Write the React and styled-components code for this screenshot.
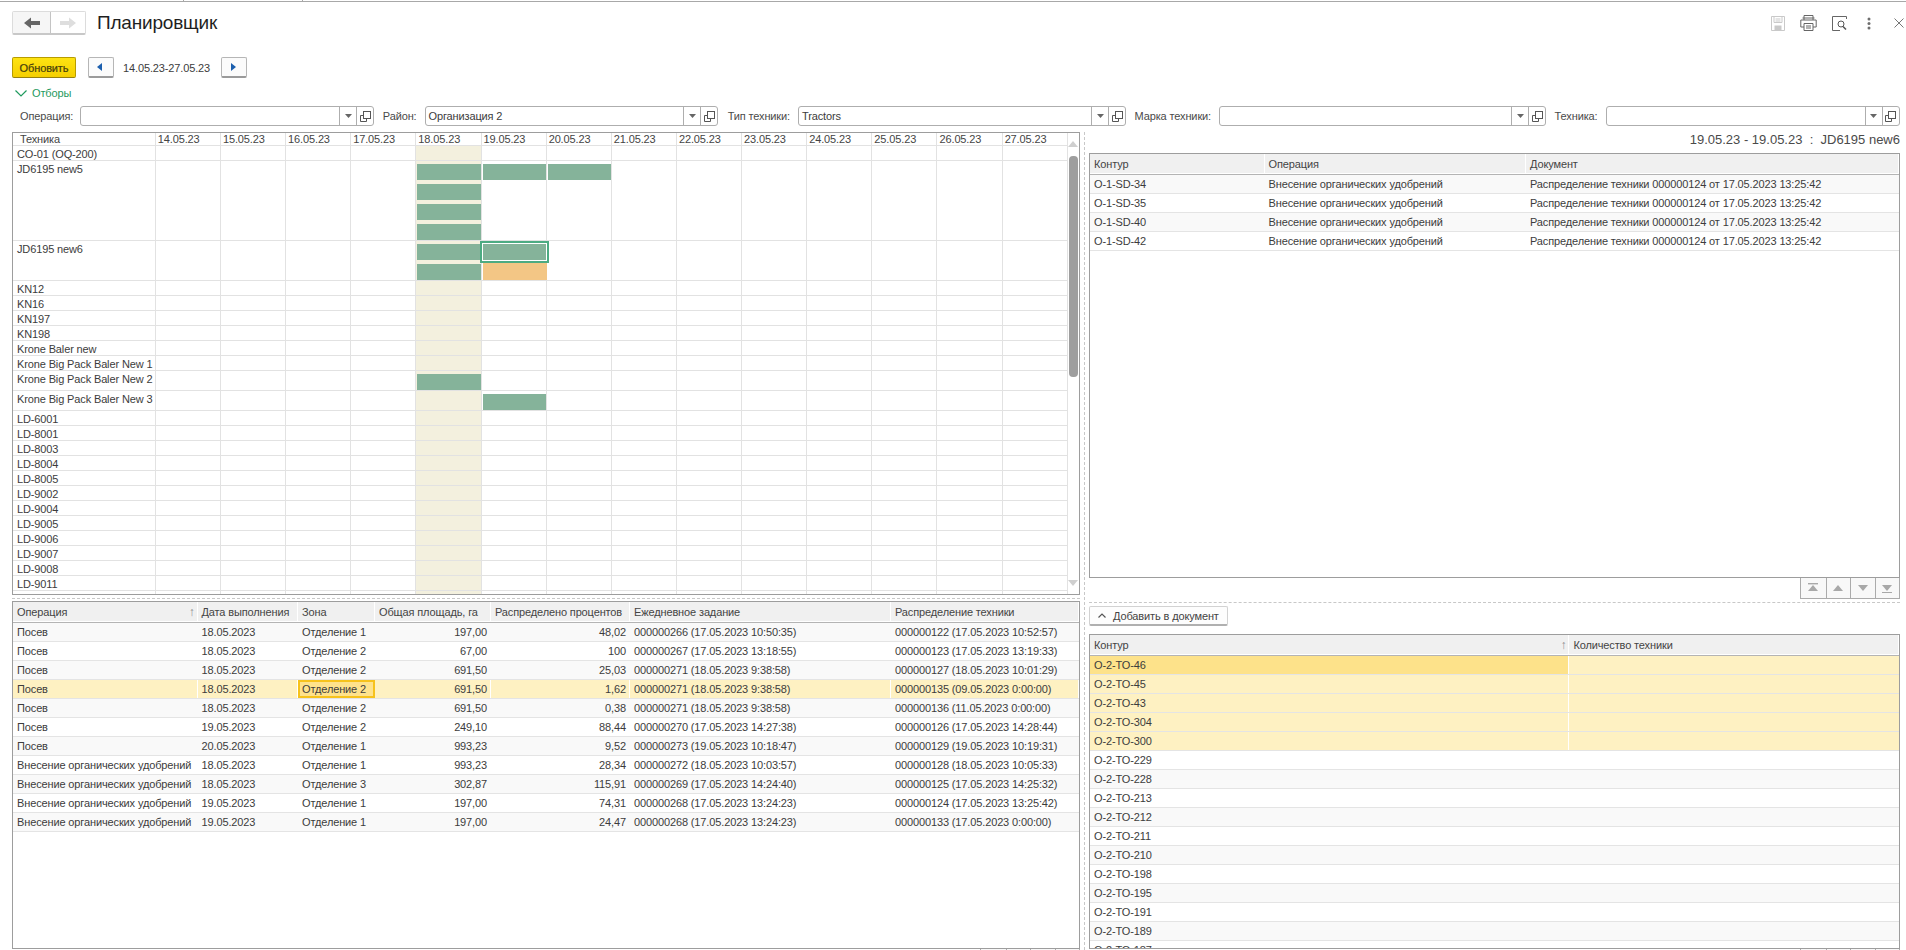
import React from 'react'
import styled, { createGlobalStyle } from 'styled-components'

const GlobalStyle = createGlobalStyle`
  html, body { margin: 0; padding: 0; background: #fff; }
  body { font-family: "Liberation Sans", Arial, sans-serif; font-size: 11px; letter-spacing: -0.13px; color: #3c3c3c; }
  * { box-sizing: border-box; }
`

const Page = styled.div`
  width: 1906px;
  height: 950px;
  overflow: hidden;
  display: flex;
  flex-direction: column;
  background: #fff;
`

const TabStrip = styled.div`
  display: flex;
  height: 2px;
  flex: none;
  border-bottom: 1px solid #a8a8a8;
`

const TabEdge = styled.div`
  width: ${(p) => p.$w}px;
  border-right: 1px solid #a8a8a8;
`

const TitleBar = styled.div`
  display: flex;
  align-items: center;
  height: 24px;
  margin-top: 9px;
  padding: 0 2px 0 12px;
  flex: none;
`

const NavGroup = styled.div`
  display: flex;
  width: 74px;
  height: 24px;
  border: 1px solid #dcdcdc;
  border-bottom: 2px solid #c8c8c8;
  border-radius: 2px;
`

const NavButton = styled.div`
  flex: ${(p) => (p.$active ? '0 0 38px' : '1')};
  display: flex;
  align-items: center;
  justify-content: center;
  background: ${(p) => (p.$active ? '#f6f6f6' : '#fff')};
  border-right: ${(p) => (p.$active ? '1px solid #c4c4c4' : 'none')};
`

const Title = styled.h1`
  margin: 0 0 0 11px;
  font-size: 19px;
  letter-spacing: -0.2px;
  font-weight: 400;
  color: #1f1f1f;
  flex: 1;
`

const TopIcon = styled.svg`
  display: block;
  flex: none;
  margin-left: ${(p) => p.$gap}px;
`

const Toolbar = styled.div`
  display: flex;
  align-items: center;
  height: 21px;
  margin-top: 22px;
  padding-left: 12px;
  flex: none;
`

const RefreshButton = styled.div`
  width: 64px;
  height: 21px;
  display: flex;
  align-items: center;
  justify-content: center;
  background: linear-gradient(#fee312, #f5cf00);
  border: 1px solid #b79c00;
  border-bottom-color: #97810c;
  border-radius: 2px;
  color: #46400c;
  font-size: 11px;
  -webkit-text-stroke: 0.2px #46400c;
`

const StepButton = styled.div`
  width: 26px;
  height: 21px;
  margin-left: ${(p) => p.$gap}px;
  display: flex;
  align-items: center;
  justify-content: center;
  border: 1px solid #b6b6b6;
  border-bottom: 2px solid #9a9a9a;
  border-radius: 2px;
  background: #fbfbfb;
`

const Period = styled.span`
  margin-left: 9px;
  width: 98px;
  font-size: 11px;
`

const FilterToggle = styled.div`
  display: flex;
  align-items: center;
  gap: 5px;
  height: 12px;
  margin-top: 9px;
  padding-left: 15px;
  color: #1f9a5e;
  font-size: 11px;
  flex: none;
`

const FilterRow = styled.div`
  display: flex;
  align-items: center;
  height: 20px;
  margin-top: 7px;
  padding-left: 20px;
  flex: none;
`

const FilterLabel = styled.label`
  width: ${(p) => p.$w}px;
  padding-right: 8px;
  text-align: right;
  white-space: nowrap;
  color: #4a4a4a;
`

const Field = styled.div`
  width: ${(p) => p.$w}px;
  height: 20px;
  display: flex;
  border: 1px solid #aeaeae;
  border-radius: 3px;
  background: #fff;
`

const FieldText = styled.div`
  flex: 1;
  padding-left: 3px;
  line-height: 18px;
  white-space: nowrap;
`

const FieldButton = styled.div`
  width: 17px;
  display: flex;
  align-items: center;
  justify-content: center;
  border-left: 1px solid #aeaeae;
`

const Main = styled.div`
  display: grid;
  grid-template-columns: 1068px 9px 811px;
  height: 818px;
  margin-top: 6px;
  padding-left: 12px;
  flex: none;
`

const Column = styled.div`
  display: flex;
  flex-direction: column;
  min-width: 0;
`

const VSplit = styled.div`
  margin-left: 4px;
  border-left: 1px dashed #c8c8c8;
`

const HSplit = styled.div`
  flex: none;
  height: 1px;
  margin: ${(p) => p.$m};
  border-top: 1px dashed #c8c8c8;
`

const Gantt = styled.div`
  height: 463px;
  flex: none;
  display: flex;
  border: 1px solid #9d9d9d;
  overflow: hidden;
`

const GanttBody = styled.div`
  width: 1054.9px;
  flex: none;
`

const GanttRow = styled.div`
  display: grid;
  grid-template-columns: 142.8px repeat(14, 65.15px);
  height: ${(p) => p.$h}px;
  border-bottom: 1px solid #e2e2e2;
  color: #3c3c3c;
`

const GanttHead = styled(GanttRow)`
  line-height: 12px;
`

const HeadCell = styled.div`
  padding-left: ${(p) => (p.$name ? 7 : 2)}px;
  border-right: 1px solid #e2e2e2;
  white-space: nowrap;
  overflow: hidden;
  color: #444;
`

const NameCell = styled.div`
  padding: 1px 0 0 4px;
  line-height: 14px;
  border-right: 1px solid #e2e2e2;
  white-space: nowrap;
  overflow: hidden;
`

const DayCell = styled.div`
  display: flex;
  flex-direction: column;
  gap: 4px;
  padding: 3px 0 0 1px;
  border-right: 1px solid #e2e2e2;
  background: ${(p) => (p.$today ? '#f3f0de' : 'transparent')};
`

const Bar = styled.div`
  flex: none;
  height: 16px;
  background: ${(p) => (p.$late ? '#f3c685' : '#85b39a')};
  ${(p) => p.$late && 'margin: -1px -1px 0 0; height: 17px;'}
  ${(p) =>
    p.$picked &&
    `
    position: relative;
    z-index: 1;
    box-shadow: 0 0 0 1px #fff, 0 0 0 3px #4dab82;
  `}
`

const ScrollTrack = styled.div`
  flex: 1;
  display: flex;
  flex-direction: column;
  align-items: center;
  padding: 6px 0 6px;
`

const ScrollThumb = styled.div`
  width: 9px;
  height: 221px;
  margin-top: 7px;
  border-radius: 4px;
  background: #9e9e9e;
`

const ScrollDown = styled.div`
  margin-top: auto;
`

const TableBox = styled.div`
  height: ${(p) => p.$h}px;
  flex: none;
  border: 1px solid #9d9d9d;
  overflow: hidden;
`

const HeadRow = styled.div`
  display: grid;
  grid-template-columns: ${(p) => p.$cols};
  height: 21px;
  border-bottom: 1px solid #b4b4b4;
`

const HeadTitle = styled.div`
  display: flex;
  align-items: center;
  justify-content: space-between;
  padding: 0 2px 0 4px;
  background: #f0f0f0;
  border-right: 1px solid #fff;
  border-bottom: 1px solid #fff;
  color: #444;
  white-space: nowrap;
  overflow: hidden;
`

const SortMark = styled.span`
  font-size: 12px;
  color: #8c8c8c;
`

const DataRow = styled.div`
  display: grid;
  grid-template-columns: ${(p) => p.$cols};
  height: 19px;
  border-bottom: 1px solid #e4e4e4;
  background: ${(p) => (p.$marked ? '#fef1c2' : p.$alt ? '#f9f9f9' : '#fff')};
`

const DataCell = styled.div`
  padding: 0 ${(p) => (p.$right ? 3 : 1)}px 0 4px;
  line-height: 18px;
  text-align: ${(p) => (p.$right ? 'right' : 'left')};
  white-space: nowrap;
  overflow: hidden;
  border-right: 1px solid ${(p) => (p.$marked ? '#fff' : 'transparent')};
  background: ${(p) => (p.$strong ? '#fde28a' : 'transparent')};
  ${(p) =>
    p.$focus &&
    `
    background: #fee28c;
    border: 2px solid #f6c21c;
    padding: 0 2px;
    line-height: 14px;
  `}
`

const Caption = styled.div`
  height: 21px;
  flex: none;
  text-align: right;
  font-size: 13px;
  letter-spacing: 0;
  line-height: 15px;
  color: #4a4a4a;
`

const Pager = styled.div`
  align-self: flex-end;
  flex: none;
  display: flex;
  height: 21px;
  border: 1px solid #ababab;
  border-top: none;
`

const PagerButton = styled.div`
  width: 24.5px;
  display: flex;
  align-items: center;
  justify-content: center;
  border-left: ${(p) => (p.$first ? 'none' : '1px solid #ababab')};
  background: #f8f8f8;
`

const AddButton = styled.div`
  width: 139px;
  height: 20px;
  flex: none;
  margin-top: 3px;
  display: flex;
  align-items: center;
  gap: 7px;
  padding-left: 8px;
  border: 1px solid #d2d2d2;
  border-bottom: 2px solid #b0b0b0;
  border-radius: 2px;
  color: #444;
  background: #fdfdfd;
`

const BlankGap = styled.div`
  height: 8px;
  flex: none;
`

const days = ['14.05.23', '15.05.23', '16.05.23', '17.05.23', '18.05.23', '19.05.23', '20.05.23', '21.05.23', '22.05.23', '23.05.23', '24.05.23', '25.05.23', '26.05.23', '27.05.23']

// bars: номер дня -> полосы сверху вниз (g зелёная, s выбранная, o оранжевая)
const plan = [
  { name: 'CO-01 (OQ-200)', h: 15 },
  { name: 'JD6195 new5', h: 80, bars: { 4: ['g', 'g', 'g', 'g'], 5: ['g'], 6: ['g'] } },
  { name: 'JD6195 new6', h: 40, bars: { 4: ['g', 'g'], 5: ['s', 'o'] } },
  { name: 'KN12', h: 15 },
  { name: 'KN16', h: 15 },
  { name: 'KN197', h: 15 },
  { name: 'KN198', h: 15 },
  { name: 'Krone Baler new', h: 15 },
  { name: 'Krone Big Pack Baler New 1', h: 15 },
  { name: 'Krone Big Pack Baler New 2', h: 20, bars: { 4: ['g'] } },
  { name: 'Krone Big Pack Baler New 3', h: 20, bars: { 5: ['g'] } },
  ...['LD-6001', 'LD-8001', 'LD-8003', 'LD-8004', 'LD-8005', 'LD-9002', 'LD-9004', 'LD-9005', 'LD-9006', 'LD-9007', 'LD-9008', 'LD-9011', ''].map((name) => ({ name, h: 15 })),
]

const tasksCols = '184.5px 100.5px 77px 116px 139px 261px 188px'
const tasks = [
  ['Посев', '18.05.2023', 'Отделение 1', '197,00', '48,02', '000000266 (17.05.2023 10:50:35)', '000000122 (17.05.2023 10:52:57)'],
  ['Посев', '18.05.2023', 'Отделение 2', '67,00', '100', '000000267 (17.05.2023 13:18:55)', '000000123 (17.05.2023 13:19:33)'],
  ['Посев', '18.05.2023', 'Отделение 2', '691,50', '25,03', '000000271 (18.05.2023 9:38:58)', '000000127 (18.05.2023 10:01:29)'],
  ['Посев', '18.05.2023', 'Отделение 2', '691,50', '1,62', '000000271 (18.05.2023 9:38:58)', '000000135 (09.05.2023 0:00:00)'],
  ['Посев', '18.05.2023', 'Отделение 2', '691,50', '0,38', '000000271 (18.05.2023 9:38:58)', '000000136 (11.05.2023 0:00:00)'],
  ['Посев', '19.05.2023', 'Отделение 2', '249,10', '88,44', '000000270 (17.05.2023 14:27:38)', '000000126 (17.05.2023 14:28:44)'],
  ['Посев', '20.05.2023', 'Отделение 1', '993,23', '9,52', '000000273 (19.05.2023 10:18:47)', '000000129 (19.05.2023 10:19:31)'],
  ['Внесение органических удобрений', '18.05.2023', 'Отделение 1', '993,23', '28,34', '000000272 (18.05.2023 10:03:57)', '000000128 (18.05.2023 10:05:33)'],
  ['Внесение органических удобрений', '18.05.2023', 'Отделение 3', '302,87', '115,91', '000000269 (17.05.2023 14:24:40)', '000000125 (17.05.2023 14:25:32)'],
  ['Внесение органических удобрений', '19.05.2023', 'Отделение 1', '197,00', '74,31', '000000268 (17.05.2023 13:24:23)', '000000124 (17.05.2023 13:25:42)'],
  ['Внесение органических удобрений', '19.05.2023', 'Отделение 1', '197,00', '24,47', '000000268 (17.05.2023 13:24:23)', '000000133 (17.05.2023 0:00:00)'],
]

const docCols = '174.5px 261.5px 1fr'
const docs = ['O-1-SD-34', 'O-1-SD-35', 'O-1-SD-40', 'O-1-SD-42']

const zoneCols = '479.4px 1fr'
const zones = ['O-2-TO-46', 'O-2-TO-45', 'O-2-TO-43', 'O-2-TO-304', 'O-2-TO-300', 'O-2-TO-229', 'O-2-TO-228', 'O-2-TO-213', 'O-2-TO-212', 'O-2-TO-211', 'O-2-TO-210', 'O-2-TO-198', 'O-2-TO-195', 'O-2-TO-191', 'O-2-TO-189', 'O-2-TO-187']

function Triangle({ dir, color = '#a8a8a8', bar }) {
  const points = { left: '6,1 6,9 1,5', right: '2,1 2,9 7,5', up: '5,2 10,8 0,8', down: '0,2 10,2 5,8' }
  return (
    <svg width="10" height="10" viewBox="0 0 10 10" style={{ display: 'block' }}>
      <polygon points={points[dir]} fill={color} />
      {bar && <rect x="0" y={dir === 'up' ? 0 : 9} width="10" height="1.4" fill={color} />}
    </svg>
  )
}

function FieldControls() {
  return (
    <>
      <FieldButton>
        <svg width="7" height="4" viewBox="0 0 7 4">
          <polygon points="0,0 7,0 3.5,4" fill="#666" />
        </svg>
      </FieldButton>
      <FieldButton>
        <svg width="11" height="11" viewBox="0 0 11 11" fill="none" stroke="#555">
          <rect x="3.5" y="0.5" width="7" height="7" />
          <path d="M3 4.5H0.5V10.5H6.5V8" />
        </svg>
      </FieldButton>
    </>
  )
}

function Filter({ label, labelWidth, width, value }) {
  return (
    <>
      <FilterLabel $w={labelWidth}>{label}</FilterLabel>
      <Field $w={width}>
        <FieldText>{value}</FieldText>
        <FieldControls />
      </Field>
    </>
  )
}

function PlanRow({ row }) {
  return (
    <GanttRow $h={row.h}>
      <NameCell>{row.name}</NameCell>
      {days.map((day, i) => (
        <DayCell key={day} $today={i === 4}>
          {(row.bars?.[i] || []).map((kind, n) => (
            <Bar key={n} $picked={kind === 's'} $late={kind === 'o'} />
          ))}
        </DayCell>
      ))}
    </GanttRow>
  )
}

function PagerBar() {
  return (
    <Pager>
      <PagerButton $first><Triangle dir="up" bar /></PagerButton>
      <PagerButton><Triangle dir="up" /></PagerButton>
      <PagerButton><Triangle dir="down" /></PagerButton>
      <PagerButton><Triangle dir="down" bar /></PagerButton>
    </Pager>
  )
}

export default function App() {
  return (
    <Page>
      <GlobalStyle />
      <TabStrip>
        <TabEdge $w={184} />
        <TabEdge $w={119} />
      </TabStrip>

      <TitleBar>
        <NavGroup>
          <NavButton $active>
            <svg width="16" height="12" viewBox="0 0 16 12">
              <path d="M0 6L7 0.5V4H16V8H7V11.5Z" fill="#666" />
            </svg>
          </NavButton>
          <NavButton>
            <svg width="16" height="12" viewBox="0 0 16 12">
              <path d="M16 6L9 0.5V4H0V8H9V11.5Z" fill="#dedede" />
            </svg>
          </NavButton>
        </NavGroup>
        <Title>Планировщик</Title>
        <TopIcon $gap={0} width="14" height="15" viewBox="0 0 14 15" fill="none" stroke="#c9c9c9">
          <path d="M0.5 0.5H13.5V14.5H0.5Z" />
          <path d="M3 1V6.5H11V1M4.5 3H9.5M4.5 5H9.5" />
          <rect x="4" y="10" width="6" height="4.5" fill="#c9c9c9" />
        </TopIcon>
        <TopIcon $gap={15} width="17" height="16" viewBox="0 0 17 16" fill="none" stroke="#666">
          <path d="M4 5V0.5H13V5" />
          <path d="M4 12H0.8V5H16.2V12H13" />
          <path d="M2.5 3H14.5" />
          <path d="M4 8.5H13V15.5H4Z" />
          <path d="M6 11H11M6 13H11" />
        </TopIcon>
        <TopIcon $gap={15} width="16" height="15" viewBox="0 0 16 15" fill="none" stroke="#666">
          <path d="M8 0.5H0.5V14.5H8" />
          <path d="M8 0.5H14.5V3" stroke="#666" />
          <circle cx="9" cy="8" r="3" stroke="#555" />
          <path d="M11 10.5L14 13.5" stroke="#555" strokeWidth="1.6" />
        </TopIcon>
        <TopIcon $gap={19} width="4" height="13" viewBox="0 0 4 13" fill="#6e6e6e">
          <circle cx="2" cy="2" r="1.5" />
          <circle cx="2" cy="6.5" r="1.5" />
          <circle cx="2" cy="11" r="1.5" />
        </TopIcon>
        <TopIcon $gap={23} width="10" height="10" viewBox="0 0 10 10" fill="none" stroke="#777">
          <path d="M0.5 0.5L9.5 9.5M9.5 0.5L0.5 9.5" />
        </TopIcon>
      </TitleBar>

      <Toolbar>
        <RefreshButton>Обновить</RefreshButton>
        <StepButton $gap={12}><Triangle dir="left" color="#1c5fae" /></StepButton>
        <Period>14.05.23-27.05.23</Period>
        <StepButton $gap={0}><Triangle dir="right" color="#1c5fae" /></StepButton>
      </Toolbar>

      <FilterToggle>
        <svg width="12" height="7" viewBox="0 0 12 7" fill="none" stroke="#1f9a5e" strokeWidth="1.2">
          <path d="M0.5 0.5L6 6L11.5 0.5" />
        </svg>
        Отборы
      </FilterToggle>

      <FilterRow>
        <Filter label="Операция:" labelWidth={60} width={294} />
        <Filter label="Район:" labelWidth={50.5} width={293.5} value="Организация 2" />
        <Filter label="Тип техники:" labelWidth={80} width={328} value="Tractors" />
        <Filter label="Марка техники:" labelWidth={93} width={327} />
        <Filter label="Техника:" labelWidth={59.5} width={294} />
      </FilterRow>

      <Main>
        <Column>
          <Gantt>
            <GanttBody>
              <GanttHead $h={13}>
                <HeadCell $name>Техника</HeadCell>
                {days.map((day) => (
                  <HeadCell key={day}>{day}</HeadCell>
                ))}
              </GanttHead>
              {plan.map((row, i) => (
                <PlanRow key={i} row={row} />
              ))}
            </GanttBody>
            <ScrollTrack>
              <Triangle dir="up" color="#cfcfcf" />
              <ScrollThumb />
              <ScrollDown>
                <Triangle dir="down" color="#cfcfcf" />
              </ScrollDown>
            </ScrollTrack>
          </Gantt>
          <HSplit $m="3px 0 2px" />
          <TableBox $h={348}>
            <HeadRow $cols={tasksCols}>
              <HeadTitle>Операция<SortMark>↑</SortMark></HeadTitle>
              <HeadTitle>Дата выполнения</HeadTitle>
              <HeadTitle>Зона</HeadTitle>
              <HeadTitle>Общая площадь, га</HeadTitle>
              <HeadTitle>Распределено процентов</HeadTitle>
              <HeadTitle>Ежедневное задание</HeadTitle>
              <HeadTitle>Распределение техники</HeadTitle>
            </HeadRow>
            {tasks.map((t, i) => {
              const marked = i === 3
              return (
                <DataRow key={i} $cols={tasksCols} $marked={marked} $alt={i % 2 === 0}>
                  <DataCell $marked={marked}>{t[0]}</DataCell>
                  <DataCell $marked={marked}>{t[1]}</DataCell>
                  <DataCell $marked={marked} $focus={marked}>{t[2]}</DataCell>
                  <DataCell $marked={marked} $right>{t[3]}</DataCell>
                  <DataCell $marked={marked} $right>{t[4]}</DataCell>
                  <DataCell $marked={marked}>{t[5]}</DataCell>
                  <DataCell $marked={marked}>{t[6]}</DataCell>
                </DataRow>
              )
            })}
          </TableBox>
          <PagerBar />
        </Column>

        <VSplit />

        <Column>
          <Caption>19.05.23 - 19.05.23&nbsp; : &nbsp;JD6195 new6</Caption>
          <TableBox $h={425}>
            <HeadRow $cols={docCols}>
              <HeadTitle>Контур</HeadTitle>
              <HeadTitle>Операция</HeadTitle>
              <HeadTitle>Документ</HeadTitle>
            </HeadRow>
            {docs.map((d, i) => (
              <DataRow key={d} $cols={docCols} $alt={i % 2 === 0}>
                <DataCell>{d}</DataCell>
                <DataCell>Внесение органических удобрений</DataCell>
                <DataCell>Распределение техники 000000124 от 17.05.2023 13:25:42</DataCell>
              </DataRow>
            ))}
          </TableBox>
          <PagerBar />
          <HSplit $m="3px 0 0" />
          <AddButton>
            <svg width="8" height="5" viewBox="0 0 8 5" fill="none" stroke="#555" strokeWidth="1.2">
              <path d="M0.5 4.5L4 1L7.5 4.5" />
            </svg>
            Добавить в документ
          </AddButton>
          <BlankGap />
          <TableBox $h={315}>
            <HeadRow $cols={zoneCols}>
              <HeadTitle>Контур<SortMark>↑</SortMark></HeadTitle>
              <HeadTitle>Количество техники</HeadTitle>
            </HeadRow>
            {zones.map((z, i) => (
              <DataRow key={z} $cols={zoneCols} $marked={i < 5} $alt={i % 2 === 0}>
                <DataCell $marked={i < 5} $strong={i === 0}>{z}</DataCell>
                <DataCell />
              </DataRow>
            ))}
          </TableBox>
          <PagerBar />
        </Column>
      </Main>
    </Page>
  )
}
